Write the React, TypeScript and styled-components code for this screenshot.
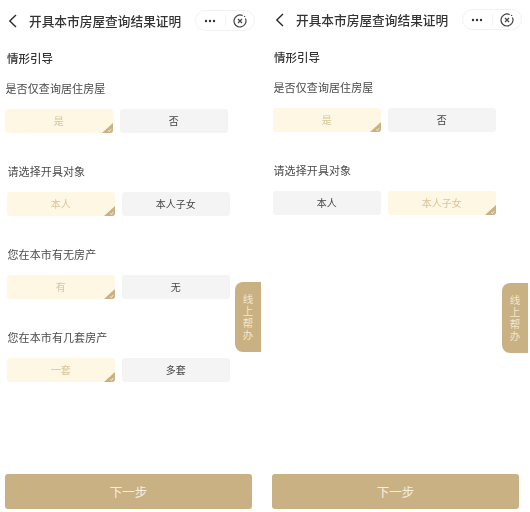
import React from 'react';
import styled, { createGlobalStyle } from 'styled-components';

const GlobalStyle = createGlobalStyle`
  html, body {
    margin: 0;
    padding: 0;
    background: #fff;
    font-family: "Noto Sans CJK SC", "Noto Sans", sans-serif;
  }
`;

const Page = styled.div`
  display: flex;
  width: 530px;
  height: 512px;
  overflow: hidden;
  filter: blur(0.4px);
`;

const Panel = styled.div<{ $width: number; $inset: number; $top: number }>`
  position: relative;
  display: flex;
  flex-direction: column;
  flex: none;
  box-sizing: border-box;
  width: ${(p) => p.$width}px;
  height: 512px;
  padding: ${(p) => p.$top}px 0 0 ${(p) => p.$inset}px;
`;

const NavBar = styled.div`
  display: flex;
  align-items: center;
  height: 21px;
  margin-bottom: 18px;
`;

const BackButton = styled.svg`
  flex: none;
  width: 10px;
  height: 14px;
  margin: 0 11px 0 3px;
  fill: none;
  stroke: #2b2b2b;
  stroke-width: 1.4;
`;

const Title = styled.div`
  flex: none;
  width: 166px;
  font-size: 12.7px;
  font-weight: 500;
  line-height: 21px;
  color: #333;
  white-space: nowrap;
`;

const Capsule = styled.div`
  display: flex;
  flex: none;
  align-items: center;
  box-sizing: border-box;
  width: 60px;
  height: 21px;
  border: 1px solid #f1f1f1;
  border-radius: 11px;
`;

const CapsuleSlot = styled.div`
  display: flex;
  flex: 1;
  align-items: center;
  justify-content: center;
  height: 11px;

  & + & {
    border-left: 1px solid #f3f3f3;
  }
`;

const Dots = styled.svg`
  width: 12px;
  height: 4px;
  fill: #333;
`;

const CloseMark = styled.svg`
  width: 14px;
  height: 14px;
  fill: none;
  stroke: #444;
  stroke-width: 1.2;
`;

const SectionTitle = styled.div`
  margin: 0 0 13px 2px;
  font-size: 11.5px;
  font-weight: 500;
  line-height: 18px;
  color: #333;
`;

const Question = styled.div<{ $inset?: number }>`
  display: flex;
  flex-direction: column;
  height: 83px;
  padding-left: ${(p) => p.$inset ?? 0}px;
`;

const Label = styled.div`
  margin: 0 0 13px 0.5px;
  font-size: 11px;
  line-height: 16px;
  letter-spacing: 0.1px;
  color: #4a4a4a;
  white-space: nowrap;
`;

const Options = styled.div`
  display: flex;
  gap: 7.5px;
`;

const Option = styled.div<{ $selected?: boolean }>`
  position: relative;
  display: flex;
  align-items: center;
  justify-content: center;
  width: 107.5px;
  height: 23.5px;
  border-radius: 3px;
  overflow: hidden;
  font-size: 10px;
  color: ${(p) => (p.$selected ? '#d8c49a' : '#444')};
  background: ${(p) => (p.$selected ? '#fdf7e3' : '#f4f4f4')};
`;

const Corner = styled.svg`
  position: absolute;
  right: 0;
  bottom: 0;
  width: 11px;
  height: 10px;
`;

const HelpTab = styled.div<{ $right: number; $top: number }>`
  position: absolute;
  top: ${(p) => p.$top}px;
  right: ${(p) => p.$right}px;
  display: flex;
  align-items: center;
  justify-content: center;
  box-sizing: border-box;
  width: 26px;
  height: 70px;
  padding: 0 7px;
  border-radius: 8px 0 0 8px;
  font-size: 10.5px;
  line-height: 11.8px;
  text-align: center;
  color: #f1e7d2;
  background: #c9b183;
`;

const NextButton = styled.div`
  display: flex;
  position: absolute;
  bottom: 3px;
  align-items: center;
  justify-content: center;
  width: 247px;
  height: 35px;
  border-radius: 3px;
  font-size: 12.5px;
  color: #f6f0e2;
  background: #c9b183;
`;

type QuestionData = {
  label: string;
  options: [string, string];
  selected: number;
  inset?: number;
};

const Choice = ({ text, selected }: { text: string; selected: boolean }) => (
  <Option $selected={selected}>
    {text}
    {selected && (
      <Corner viewBox="0 0 11 10">
        <path d="M11 0V10H0Z" fill="#c9b183" />
        <path d="M6 7.4l1.5 1.1 1.8-2.7" fill="none" stroke="#fdf7e3" strokeWidth="0.8" />
      </Corner>
    )}
  </Option>
);

const Phone = ({
  width,
  inset,
  top,
  tabRight,
  tabTop,
  questions,
}: {
  width: number;
  inset: number;
  top: number;
  tabRight: number;
  tabTop: number;
  questions: QuestionData[];
}) => (
  <Panel $width={width} $inset={inset} $top={top}>
    <NavBar>
      <BackButton viewBox="0 0 10 14">
        <path d="M8 1L1.8 7L8 13" />
      </BackButton>
      <Title>开具本市房屋查询结果证明</Title>
      <Capsule>
        <CapsuleSlot>
          <Dots viewBox="0 0 12 4">
            <circle cx="2" cy="2" r="1.2" />
            <circle cx="6" cy="2" r="1.2" />
            <circle cx="10" cy="2" r="1.2" />
          </Dots>
        </CapsuleSlot>
        <CapsuleSlot>
          <CloseMark viewBox="0 0 14 14">
            <path d="M9.6 1.6A6 6 0 1 0 12.4 4.4" />
            <path d="M5 5l4 4M9 5l-4 4" />
            <circle cx="11.6" cy="2.4" r="0.7" fill="#444" stroke="none" />
          </CloseMark>
        </CapsuleSlot>
      </Capsule>
    </NavBar>
    <SectionTitle>情形引导</SectionTitle>
    {questions.map((q) => (
      <Question key={q.label} $inset={q.inset}>
        <Label>{q.label}</Label>
        <Options>
          {q.options.map((text, i) => (
            <Choice key={text} text={text} selected={q.selected === i} />
          ))}
        </Options>
      </Question>
    ))}
    <NextButton>下一步</NextButton>
    <HelpTab $right={tabRight} $top={tabTop}>线上帮办</HelpTab>
  </Panel>
);

const leftQuestions: QuestionData[] = [
  { label: '是否仅查询居住房屋', options: ['是', '否'], selected: 0 },
  { label: '请选择开具对象', options: ['本人', '本人子女'], selected: 0, inset: 2 },
  { label: '您在本市有无房产', options: ['有', '无'], selected: 0, inset: 2 },
  { label: '您在本市有几套房产', options: ['一套', '多套'], selected: 0, inset: 2 },
];

const rightQuestions: QuestionData[] = [
  { label: '是否仅查询居住房屋', options: ['是', '否'], selected: 0, inset: 1 },
  { label: '请选择开具对象', options: ['本人', '本人子女'], selected: 1, inset: 1 },
];

export default function App() {
  return (
    <>
      <GlobalStyle />
      <Page>
        <Phone width={267} inset={5} top={10} tabRight={6} tabTop={282} questions={leftQuestions} />
        <Phone width={263} inset={5} top={9} tabRight={2} tabTop={283} questions={rightQuestions} />
      </Page>
    </>
  );
}
